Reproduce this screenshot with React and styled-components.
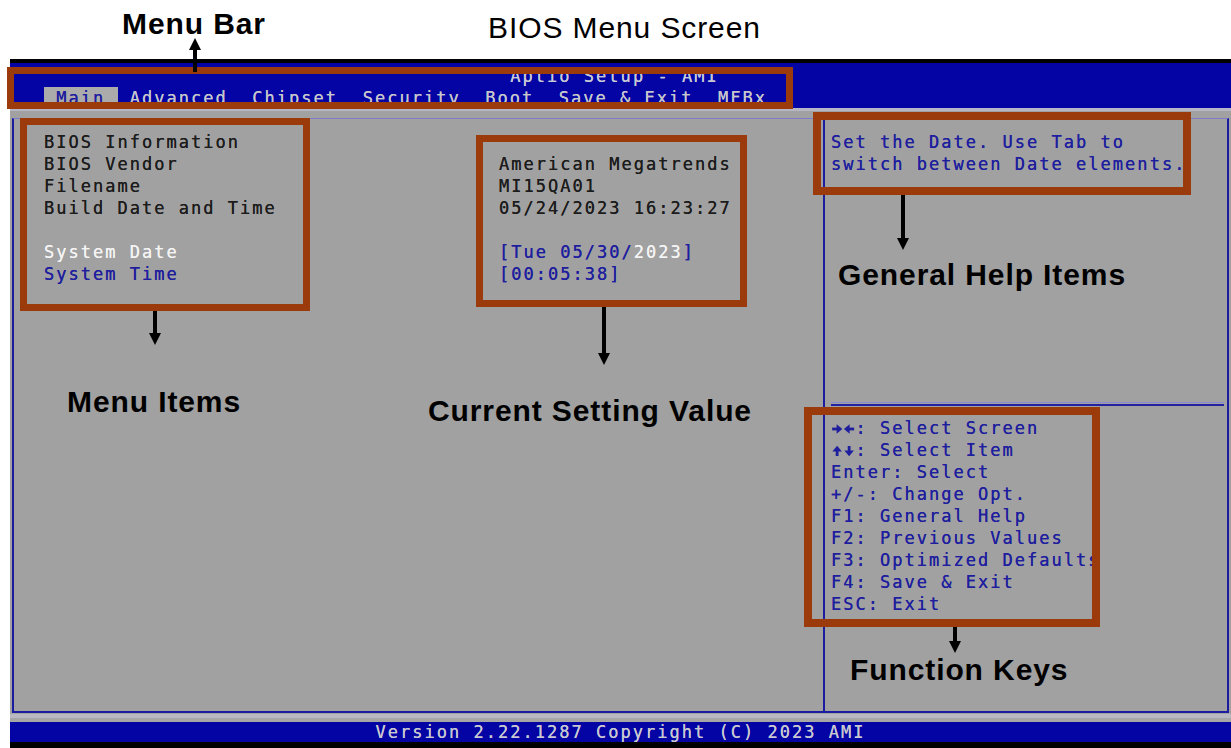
import React from 'react';
import styled, { createGlobalStyle } from 'styled-components';

const GlobalStyle = createGlobalStyle`
  html, body { margin: 0; padding: 0; background: #ffffff; }
  body { font-family: "Liberation Sans", Arial, sans-serif; }
  #root { width: 1231px; height: 748px; }
`;

const BLUE = '#0404a4';
const GRAY = '#a1a1a1';
const INK = '#1c1c1c';
const LINK = '#1e1e9e';
const WHITE = '#f4f4f4';
const RUST = '#9b3a0a';
const MONO = `"DejaVu Sans Mono", "Liberation Mono", monospace`;

const Page = styled.div`
  position: relative;
  width: 1231px;
  height: 748px;
  overflow: hidden;
  background: #ffffff;
`;

const Header = styled.header`
  height: 59px;
  box-sizing: border-box;
  display: grid;
  grid-template-columns: 366px 1fr;
  padding-left: 122px;
`;

const Title = styled.h1`
  margin: 0;
  padding-top: ${(p) => p.$top}px;
  font-family: "Liberation Sans", Arial, sans-serif;
  font-weight: ${(p) => (p.$bold ? 700 : 400)};
  font-size: 30px;
  line-height: 30px;
  letter-spacing: 0.9px;
  color: #000;
  white-space: nowrap;
`;

const Screen = styled.section`
  margin-left: 10px;
  width: 1221px;
  display: flex;
  flex-direction: column;
  font-family: ${MONO};
  font-size: 17px;
  letter-spacing: 2.02px;
  text-shadow: 0 0 0.5px currentColor;
`;

const TopBar = styled.div`
  border-top: 4px solid #000;
  background: ${BLUE};
  height: 45px;
  display: flex;
  flex-direction: column;
`;

const SetupTitle = styled.div`
  margin-top: 2px;
  height: 22px;
  line-height: 22px;
  text-align: center;
  padding-right: 12px;
  color: #c9c9d6;
`;

const TabRow = styled.nav`
  height: 21px;
  display: flex;
  padding-left: 34px;
`;

const Tab = styled.span`
  padding: 0 12.25px;
  height: 21px;
  line-height: 22px;
  white-space: pre;
  color: ${(p) => (p.$active ? LINK : '#c6c6cc')};
  background: ${(p) => (p.$active ? '#ababab' : 'transparent')};
`;

const Strip = styled.div`
  height: 3px;
  background: #b6b6c6;
`;

const Body = styled.div`
  background: ${GRAY};
  padding: 7px 2px 0 2px;
`;

const Frame = styled.div`
  height: 595px;
  box-sizing: border-box;
  border-top: 1px solid #7c7cc8;
  border-left: 2px solid #1c1ca0;
  border-right: 2px solid #1c1ca0;
  border-bottom: 2px solid #1c1ca0;
  display: grid;
  grid-template-columns: 809px 1fr;
`;

const MainPanel = styled.div`
  padding: 12px 0 0 30px;
`;

const InfoRow = styled.div`
  display: grid;
  grid-template-columns: 455px 1fr;
  height: 22px;
  line-height: 22px;
  white-space: pre;
`;

const Txt = styled.span`
  color: ${(p) => (p.$tone === 'white' ? WHITE : p.$tone === 'blue' ? LINK : INK)};
`;

const HelpPanel = styled.aside`
  border-left: 2px solid #1c1ca0;
  display: flex;
  flex-direction: column;
`;

const HelpText = styled.div`
  height: 283px;
  box-sizing: border-box;
  padding: 12px 0 0 6px;
  color: ${LINK};
  line-height: 22px;
  white-space: pre;
`;

const Separator = styled.hr`
  margin: 0 3px 0 6px;
  height: 0;
  border: 0;
  border-top: 1px solid #8c8cd4;
  border-bottom: 2px solid #2222a2;
  padding-top: 1px;
`;

const KeyList = styled.ul`
  list-style: none;
  margin: 11px 0 0 0;
  padding: 0 0 0 6px;
  color: ${LINK};
  line-height: 22px;
  white-space: pre;
`;

const Key = styled.li`
  height: 22px;
`;

const KeyArrowSvg = styled.svg`
  display: inline-block;
  width: 12.25px;
  height: 12px;
  vertical-align: -1px;
`;

const ARROW_ROT = { right: 0, down: 90, left: 180, up: 270 };

function KeyArrow({ dir }) {
  return (
    <KeyArrowSvg viewBox="0 0 12 12" aria-hidden="true">
      <g transform={`rotate(${ARROW_ROT[dir]} 6 6)`} fill={LINK}>
        <rect x="1" y="4.6" width="6" height="2.8" />
        <polygon points="5.5,1.2 11.2,6 5.5,10.8" />
      </g>
    </KeyArrowSvg>
  );
}

const BottomStrip = styled.div`
  height: 9px;
  background: linear-gradient(#a4a4a4 0 1px, #b9b9c2 1px 5px, #a6a6a6 5px);
`;

const Footer = styled.footer`
  height: 20px;
  line-height: 21px;
  background: ${BLUE};
  border-bottom: 6px solid #000;
  text-align: center;
  color: #c8c8d2;
`;

const Callout = styled.div`
  position: absolute;
  box-sizing: border-box;
  left: ${(p) => p.$x}px;
  top: ${(p) => p.$y}px;
  width: ${(p) => p.$w}px;
  height: ${(p) => p.$h}px;
  border: ${(p) => p.$t}px solid ${RUST};
  pointer-events: none;
`;

const CalloutLabel = styled.div`
  position: absolute;
  left: ${(p) => p.$x}px;
  top: ${(p) => p.$y}px;
  font-family: "Liberation Sans", Arial, sans-serif;
  font-weight: 700;
  font-size: 30px;
  line-height: 30px;
  letter-spacing: 0.9px;
  color: #000;
  white-space: nowrap;
`;

const ArrowSvg = styled.svg`
  position: absolute;
  left: ${(p) => p.$x - 8}px;
  top: ${(p) => p.$y}px;
  overflow: visible;
`;

function Arrow({ x, from, to }) {
  const up = to < from;
  const top = Math.min(from, to);
  const h = Math.abs(to - from);
  return (
    <ArrowSvg $x={x} $y={top} width="16" height={h} viewBox={`0 0 16 ${h}`}>
      {up ? (
        <>
          <polygon points="8,0 2,12 14,12" fill="#000" />
          <rect x="6" y="10" width="4" height={h - 10} fill="#000" />
        </>
      ) : (
        <>
          <rect x="6" y="0" width="4" height={h - 10} fill="#000" />
          <polygon points={`2,${h - 12} 14,${h - 12} 8,${h}`} fill="#000" />
        </>
      )}
    </ArrowSvg>
  );
}

const tabs = ['Main', 'Advanced', 'Chipset', 'Security', 'Boot', 'Save & Exit', 'MFBx'];

const rows = [
  { label: 'BIOS Information', tone: 'ink', value: [] },
  { label: 'BIOS Vendor', tone: 'ink', value: [['American Megatrends', 'ink']] },
  { label: 'Filename', tone: 'ink', value: [['MI15QA01', 'ink']] },
  { label: 'Build Date and Time', tone: 'ink', value: [['05/24/2023 16:23:27', 'ink']] },
  { label: '', tone: 'ink', value: [] },
  { label: 'System Date', tone: 'white', value: [['[Tue 05/30/', 'blue'], ['2023', 'white'], [']', 'blue']] },
  { label: 'System Time', tone: 'blue', value: [['[00:05:38]', 'blue']] },
];

const keys = [
  [<KeyArrow key="a1" dir="right" />, <KeyArrow key="a2" dir="left" />, ': Select Screen'],
  [<KeyArrow key="b1" dir="up" />, <KeyArrow key="b2" dir="down" />, ': Select Item'],
  ['Enter: Select'],
  ['+/-: Change Opt.'],
  ['F1: General Help'],
  ['F2: Previous Values'],
  ['F3: Optimized Defaults'],
  ['F4: Save & Exit'],
  ['ESC: Exit'],
];

const callouts = [
  { x: 7, y: 67, w: 786, h: 42, t: 7 },
  { x: 20, y: 118, w: 290, h: 193, t: 7 },
  { x: 476, y: 135, w: 271, h: 172, t: 7 },
  { x: 813, y: 112, w: 378, h: 83, t: 8 },
  { x: 804, y: 407, w: 296, h: 220, t: 8 },
];

const labels = [
  { x: 67, y: 387, text: 'Menu Items' },
  { x: 428, y: 396, text: 'Current Setting Value' },
  { x: 838, y: 260, text: 'General Help Items' },
  { x: 850, y: 655, text: 'Function Keys' },
];

const arrows = [
  { x: 195, from: 72, to: 38 },
  { x: 155, from: 311, to: 345 },
  { x: 604, from: 307, to: 365 },
  { x: 903, from: 195, to: 250 },
  { x: 955, from: 627, to: 653 },
];

export default function App() {
  return (
    <>
      <GlobalStyle />
      <Page>
        <Header>
          <Title $bold $top={9}>Menu Bar</Title>
          <Title $top={13}>BIOS Menu Screen</Title>
        </Header>
        <Screen>
          <TopBar>
            <SetupTitle>Aptio Setup - AMI</SetupTitle>
            <TabRow>
              {tabs.map((t, i) => (
                <Tab key={t} $active={i === 0}>{t}</Tab>
              ))}
            </TabRow>
          </TopBar>
          <Strip />
          <Body>
            <Frame>
              <MainPanel>
                {rows.map((r, i) => (
                  <InfoRow key={i}>
                    <Txt $tone={r.tone}>{r.label}</Txt>
                    <span>
                      {r.value.map(([v, tone], j) => (
                        <Txt key={j} $tone={tone}>{v}</Txt>
                      ))}
                    </span>
                  </InfoRow>
                ))}
              </MainPanel>
              <HelpPanel>
                <HelpText>{'Set the Date. Use Tab to\nswitch between Date elements.'}</HelpText>
                <Separator />
                <KeyList>
                  {keys.map((k, i) => (
                    <Key key={i}>{k}</Key>
                  ))}
                </KeyList>
              </HelpPanel>
            </Frame>
          </Body>
          <BottomStrip />
          <Footer>Version 2.22.1287 Copyright (C) 2023 AMI</Footer>
        </Screen>
        {callouts.map((c, i) => (
          <Callout key={i} $x={c.x} $y={c.y} $w={c.w} $h={c.h} $t={c.t} />
        ))}
        {arrows.map((a, i) => (
          <Arrow key={i} {...a} />
        ))}
        {labels.map((l) => (
          <CalloutLabel key={l.text} $x={l.x} $y={l.y}>{l.text}</CalloutLabel>
        ))}
      </Page>
    </>
  );
}
